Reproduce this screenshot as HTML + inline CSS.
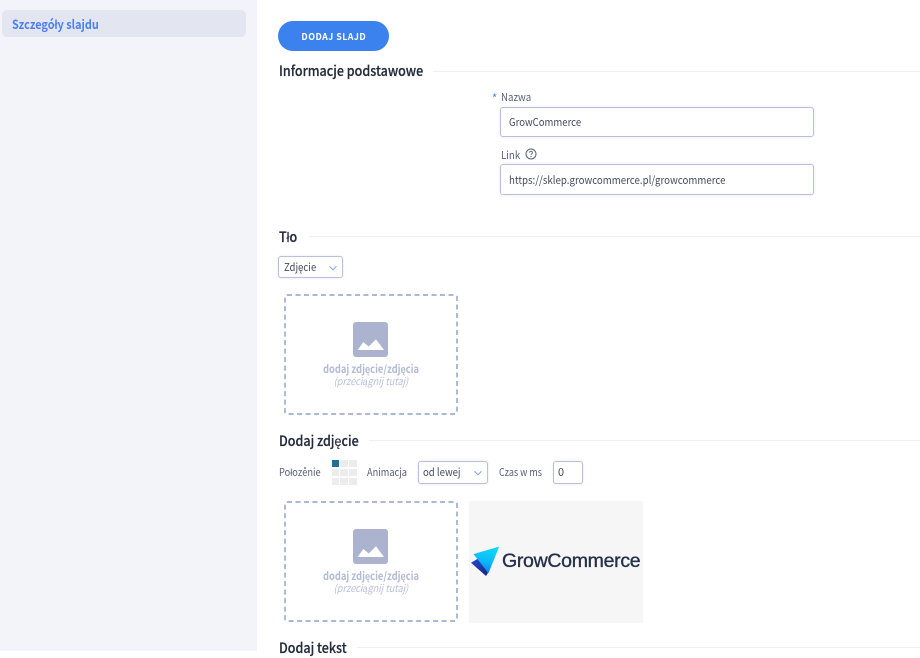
<!DOCTYPE html>
<html lang="pl"><head><meta charset="utf-8"><title>Szczegóły slajdu</title>
<style>
html,body{margin:0;padding:0;background:#fff}
body{width:920px;height:651px;position:relative;overflow:hidden;font-family:"Noto Sans CJK JP","Liberation Sans",sans-serif;color:#30384c}
.a{position:absolute;white-space:nowrap}
.t{position:absolute;white-space:nowrap;line-height:18px;height:18px;transform-origin:left center;transform:scaleX(.88)}
.h{font-size:14px;font-weight:500;color:#232b3c;transform:scaleX(.895);-webkit-text-stroke:.2px #232b3c}
.ls{font-family:"Liberation Sans",sans-serif}
.l{position:absolute;height:1px;background:#eef0f4;right:0}
.inp{position:absolute;box-sizing:border-box;border:1px solid #b9c0dc;border-radius:3px;background:#fff;font-size:11px;padding-left:8px;color:#454c5e;box-shadow:0 0 2px rgba(180,190,220,.4)}
.inp span{display:inline-block;transform-origin:left center;transform:scaleX(.87);white-space:nowrap}
.lb{font-size:11px;color:#59607a}
.drop{position:absolute;left:284px;width:174px;height:122px;box-sizing:border-box}
.drop svg.b{position:absolute;left:0;top:0}
.d1{position:absolute;left:0;width:174px;text-align:center;font-size:11px;font-weight:700;color:#b3bbd5;line-height:14px;transform:scaleX(.85)}
.d2{position:absolute;left:0;width:174px;text-align:center;font-size:10.5px;font-style:italic;color:#b8bfd8;line-height:14px;transform:scaleX(.87)}
.g{position:absolute;width:7.5px;height:7px;background:#ececec}
</style></head><body>
<div class="a" style="left:0;top:0;width:257px;height:651px;background:#f3f4f9"></div>
<div class="a" style="left:1.500px;top:10px;width:244.500px;height:27px;background:#e3e6f0;border-radius:5px"></div>
<div class="t" style="left:12px;top:15px;font-size:12.5px;font-weight:700;color:#4b7ff0;transform:scaleX(.87)">Szczegóły slajdu</div>

<div class="a" style="left:278px;top:21px;width:111px;height:30px;background:#3b82ee;border-radius:15px"></div>
<div class="t" style="left:278px;top:26.500px;width:111px;text-align:center;font-size:9.500px;font-weight:700;color:#fff;letter-spacing:.5px;transform:none"><span style="display:inline-block;transform:scaleX(.93)">DODAJ SLAJD</span></div>

<div class="t h" style="left:279px;top:62px">Informacje podstawowe</div>
<div class="l" style="left:433px;top:71px"></div>

<div class="t" style="left:492px;top:89px;font-size:11px;color:#3b82ee;transform:none">*</div>
<div class="t lb" style="left:501px;top:88px">Nazwa</div>
<div class="inp" style="left:500px;top:107px;width:314px;height:30px;line-height:28px"><span>GrowCommerce</span></div>
<div class="t lb" style="left:501px;top:146px">Link</div>
<svg class="a" style="left:525px;top:148px" width="12" height="12" viewBox="0 0 12 12"><circle cx="6" cy="6" r="5" fill="none" stroke="#5b6278" stroke-width="1"/><path d="M4.5 4.7c0-.9.7-1.4 1.5-1.4s1.500.5 1.500 1.300c0 1.200-1.500 1.200-1.500 2.300" fill="none" stroke="#5b6278" stroke-width=".9"/><circle cx="6" cy="8.600" r=".6" fill="#5b6278"/></svg>
<div class="inp" style="left:500px;top:164px;width:314px;height:31px;line-height:30px"><span style="transform:scaleX(.882)">https://sklep.growcommerce.pl/growcommerce</span></div>

<div class="t h" style="left:279px;top:228px">T<span class="ls">ł</span>o</div>
<div class="l" style="left:309px;top:236px"></div>

<div class="inp" style="left:278px;top:256px;width:65px;height:22px;line-height:20px;padding-left:5px"><span>Zdjęcie</span></div>
<svg class="a" style="left:329px;top:265px" width="8" height="6" viewBox="0 0 8 6"><path d="M.5 1.200 4 4.800 7.500 1.200" fill="none" stroke="#7d9fe0" stroke-width="1"/></svg>

<div class="drop" style="top:294px">
<svg class="b" width="174" height="122"><rect x="1" y="1" width="172" height="119" rx="2" fill="none" stroke="#a3add0" stroke-width="1.700" stroke-dasharray="5 3.500"/></svg>
<svg class="a" style="left:69px;top:28px" width="36" height="35" viewBox="0 0 36 35"><rect width="35" height="35" rx="3" fill="#abb3cf"/><path d="M4.700 28 10.300 20 15.700 24.500 23 17.300 31 28Z" fill="#fff"/></svg>
<div class="d1" style="top:68px">dodaj zdjęcie/zdjęcia</div>
<div class="d2" style="top:81px">(przeciągnij tutaj)</div>
</div>

<div class="t h" style="left:279px;top:432px">Dodaj zdjęcie</div>
<div class="l" style="left:369px;top:440px"></div>

<div class="t lb" style="left:279px;top:464px;font-size:10.5px">Po<span class="ls">ł</span>ożenie</div>
<div class="g" style="left:331.500px;top:460px;background:#1f6f9f"></div><div class="g" style="left:340px;top:460px"></div><div class="g" style="left:349px;top:460px"></div>
<div class="g" style="left:331.500px;top:469px"></div><div class="g" style="left:340px;top:469px"></div><div class="g" style="left:349px;top:469px"></div>
<div class="g" style="left:331.500px;top:478px"></div><div class="g" style="left:340px;top:478px"></div><div class="g" style="left:349px;top:478px"></div>
<div class="t lb" style="left:367px;top:464px;font-size:10.5px">Animacja</div>
<div class="inp" style="left:418px;top:461px;width:70px;height:23px;line-height:21px;padding-left:4px"><span>od lewej</span></div>
<svg class="a" style="left:474px;top:470px" width="8" height="6" viewBox="0 0 8 6"><path d="M.5 1.200 4 4.800 7.500 1.200" fill="none" stroke="#7d9fe0" stroke-width="1"/></svg>
<div class="t lb" style="left:499px;top:464px;font-size:10.5px;transform:scaleX(.86)">Czas w ms</div>
<div class="inp" style="left:553px;top:461px;width:30px;height:23px;line-height:21px;padding-left:4px">0</div>

<div class="drop" style="top:501px">
<svg class="b" width="174" height="122"><rect x="1" y="1" width="172" height="119" rx="2" fill="none" stroke="#a3add0" stroke-width="1.700" stroke-dasharray="5 3.500"/></svg>
<svg class="a" style="left:69px;top:28px" width="36" height="35" viewBox="0 0 36 35"><rect width="35" height="35" rx="3" fill="#abb3cf"/><path d="M4.700 28 10.300 20 15.700 24.500 23 17.300 31 28Z" fill="#fff"/></svg>
<div class="d1" style="top:68px">dodaj zdjęcie/zdjęcia</div>
<div class="d2" style="top:81px">(przeciągnij tutaj)</div>
</div>

<div class="a" style="left:469px;top:501px;width:174px;height:122px;background:#f6f6f6;border-radius:2px"></div>
<svg class="a" style="left:469px;top:540px" width="34" height="40" viewBox="0 0 34 40">
<defs><linearGradient id="c" x1="0.700" y1="0" x2="0.500" y2="1"><stop offset="0" stop-color="#0cd8fd"/><stop offset=".6" stop-color="#0cb8f8"/><stop offset="1" stop-color="#0a84ee"/></linearGradient><linearGradient id="n" x1="0" y1="0" x2="1" y2="1"><stop offset="0" stop-color="#2a4bd4"/><stop offset="1" stop-color="#14237f"/></linearGradient></defs>
<path d="M2 22.700 10 18 19 33 17 36Z" fill="url(#n)"/>
<path d="M5.300 14.300 29.300 7.300 19.300 32.300Z" fill="url(#c)" stroke="url(#c)" stroke-width="1" stroke-linejoin="round"/>
</svg>
<div class="t" style="left:502px;top:549px;height:24px;line-height:24px;font-size:19.500px;color:#25304a;font-family:'Liberation Sans',sans-serif;letter-spacing:-.3px;-webkit-text-stroke:.35px #25304a;transform:none">GrowCommerce</div>

<div class="t h" style="left:279px;top:639px">Dodaj tekst</div>
<div class="l" style="left:357px;top:647px"></div>
</body></html>
